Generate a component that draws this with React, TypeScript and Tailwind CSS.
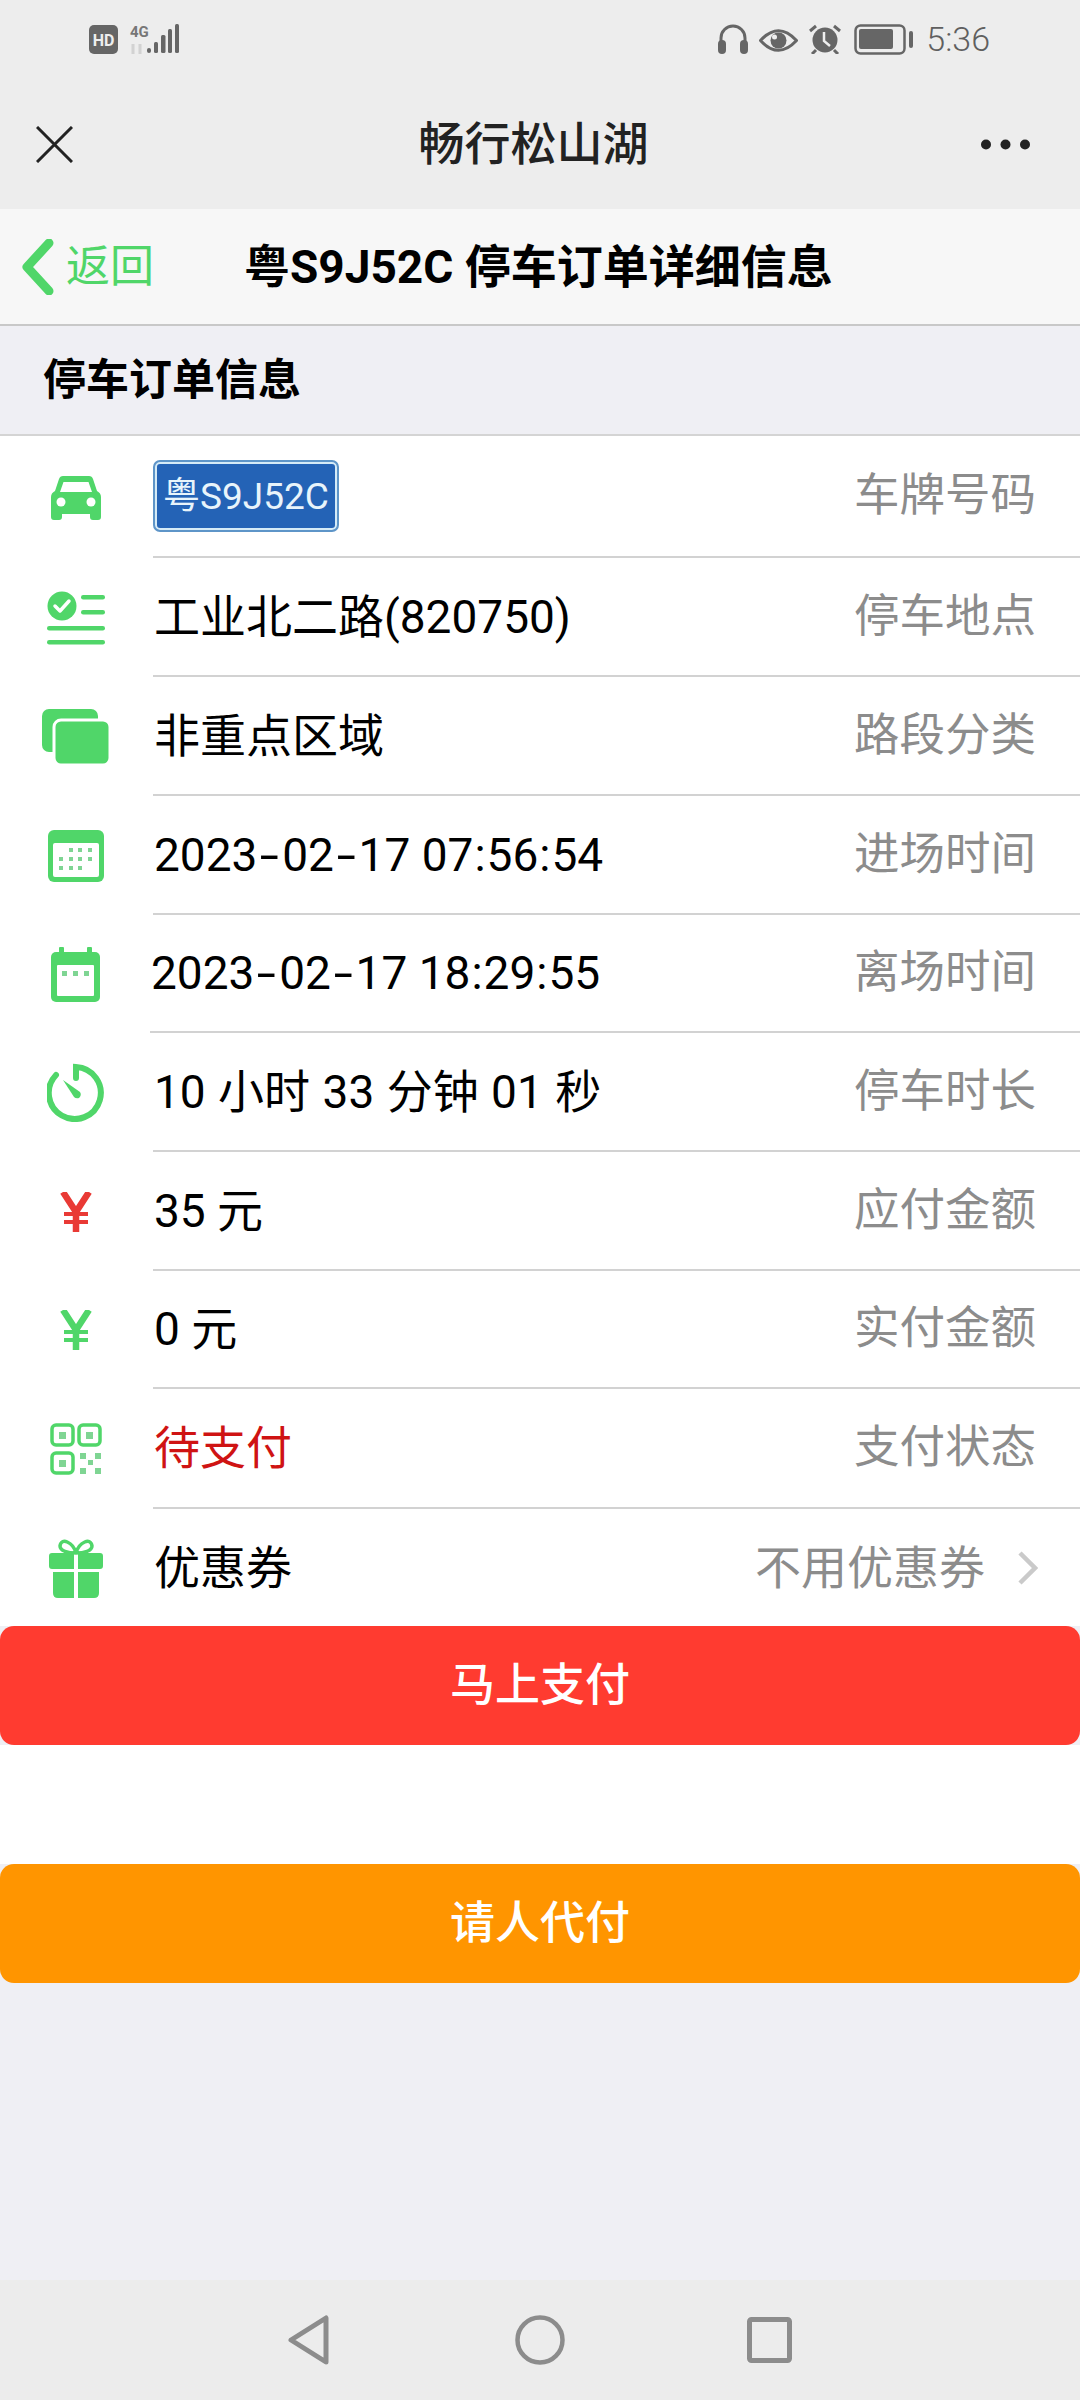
import React from 'react';

const fontStack = 'font-["Roboto","Noto_Sans_CJK_SC",sans-serif]';

const GREEN = '#50d669';
const DOT = '#7fd593';

const CarIcon = () => (
  <svg width="50" height="45" viewBox="0 0 50 45">
    <path fill={GREEN} d="M12 1h26q3 0 4 3l4 12q4 2 4 6v20q0 3-3 3h-5q-3 0-3-3v-3H11v3q0 3-3 3H3q-3 0-3-3V22q0-4 4-6L8 4q1-3 4-3z" />
    <path fill="#fff" d="M12.500 7h25l3.500 10H9z" />
    <circle cx="10" cy="27" r="4.500" fill="#fff" />
    <circle cx="40" cy="27" r="4.500" fill="#fff" />
  </svg>
);

const ListIcon = () => (
  <svg width="58" height="54" viewBox="0 0 58 54">
    <circle cx="15" cy="15" r="14.500" fill={GREEN} />
    <path d="M8 15l5 5 9-10" fill="none" stroke="#fff" strokeWidth="3.500" strokeLinecap="round" strokeLinejoin="round" />
    <rect x="34" y="4" width="24" height="4.500" rx="2.200" fill={GREEN} />
    <rect x="34" y="19" width="24" height="4.500" rx="2.200" fill={GREEN} />
    <rect x="0" y="35" width="58" height="4.500" rx="2.200" fill={GREEN} />
    <rect x="0" y="49" width="58" height="4.500" rx="2.200" fill={GREEN} />
  </svg>
);

const CardsIcon = () => (
  <svg width="68" height="56" viewBox="0 0 68 56">
    <rect x="0" y="0" width="56" height="43" rx="7" fill={GREEN} />
    <rect x="12" y="11" width="56" height="45" rx="7" fill={GREEN} stroke="#fff" strokeWidth="3" />
  </svg>
);

const CalendarDotsIcon = () => {
  const dots = [
    [23, 20], [32, 20], [42, 20],
    [13, 29], [23, 29], [32, 29], [42, 29],
    [13, 38], [23, 38], [32, 38],
  ];
  return (
    <svg width="56" height="52" viewBox="0 0 56 52">
      <rect x="0" y="0" width="56" height="52" rx="6" fill={GREEN} />
      <rect x="5" y="13" width="46" height="34" rx="2" fill="#fff" />
      {dots.map(([x, y]) => (
        <rect key={`${x}-${y}`} x={x - 2} y={y - 2} width="4" height="4" fill={DOT} />
      ))}
    </svg>
  );
};

const CalendarIcon = () => (
  <svg width="50" height="55" viewBox="0 0 50 55">
    <rect x="8" y="0" width="5" height="10" rx="1" fill={GREEN} />
    <rect x="36" y="0" width="5" height="10" rx="1" fill={GREEN} />
    <rect x="0" y="5" width="49" height="50" rx="5" fill={GREEN} />
    <rect x="6" y="18" width="37" height="31" rx="1" fill="#fff" />
    <rect x="11" y="24" width="5" height="5" fill={DOT} />
    <rect x="22" y="24" width="5" height="5" fill={DOT} />
    <rect x="33" y="24" width="5" height="5" fill={DOT} />
  </svg>
);

const TimerIcon = () => (
  <svg width="58" height="59" viewBox="0 0 58 59">
    <path d="M9 12A26 26 0 1 0 29 4v11" fill="none" stroke={GREEN} strokeWidth="6" strokeLinecap="round" />
    <path d="M16 17l17 12q2 3-1 6-3 1-5-1z" fill={GREEN} />
  </svg>
);

const YuanIcon = ({ color }: { color: string }) => (
  <svg width="32" height="40" viewBox="0 0 32 40">
    <path d="M3 0l13 20L29 0M16 20v20" fill="none" stroke={color} strokeWidth="6.500" />
    <path d="M4 22h24M4 30h24" fill="none" stroke={color} strokeWidth="4" />
  </svg>
);

const QrIcon = () => (
  <svg width="52" height="52" viewBox="0 0 52 52">
    <rect x="2" y="2" width="21" height="20" rx="4" fill="none" stroke={GREEN} strokeWidth="3.500" />
    <rect x="29" y="2" width="21" height="20" rx="4" fill="none" stroke={GREEN} strokeWidth="3.500" />
    <rect x="2" y="30" width="21" height="20" rx="4" fill="none" stroke={GREEN} strokeWidth="3.500" />
    <rect x="9" y="9" width="7" height="7" fill={DOT} />
    <rect x="36" y="9" width="7" height="7" fill={DOT} />
    <rect x="9" y="37" width="7" height="7" fill={DOT} />
    <rect x="30" y="30" width="6" height="6" fill={DOT} />
    <rect x="45" y="30" width="6" height="6" fill={DOT} />
    <rect x="38" y="37" width="5" height="5" fill={DOT} />
    <rect x="30" y="45" width="6" height="6" fill={DOT} />
    <rect x="45" y="45" width="6" height="6" fill={DOT} />
  </svg>
);

const GiftIcon = () => (
  <svg width="54" height="60" viewBox="0 0 54 60">
    <path d="M27 15C24 4 12-1 11 8c0 5 8 7 16 7zM27 15C30 4 42-1 43 8c0 5-8 7-16 7z" fill="none" stroke={GREEN} strokeWidth="3.500" />
    <path fill={GREEN} d="M3 15h22v16H3q-3 0-3-3V18q0-3 3-3zM29 15h22q3 0 3 3v10q0 3-3 3H29zM4 34h21v26H9q-5 0-5-5zM29 34h21v21q0 5-5 5H29z" />
  </svg>
);

// date strings have much wider dashes and colons in the phone's font
const DateText = ({ text }: { text: string }) => (
  <>
    {text.split(/([-:])/).map((part, i) => {
      if (part === '-') return <span key={i} className="mx-[6px] inline-block scale-x-150">-</span>;
      if (part === ':') return <span key={i} className="mx-[1px] inline-block">:</span>;
      return <span key={i}>{part}</span>;
    })}
  </>
);

const rows = [
  { icon: <CarIcon />, value: null, label: '车牌号码', height: 'h-[122px]' },
  { icon: <ListIcon />, value: '工业北二路(820750)', label: '停车地点', height: 'h-[119px]' },
  { icon: <CardsIcon />, value: '非重点区域', label: '路段分类', height: 'h-[119px]' },
  { icon: <CalendarDotsIcon />, date: '2023-02-17 07:56:54', label: '进场时间', height: 'h-[119px]' },
  { icon: <CalendarIcon />, date: '2023-02-17 18:29:55', label: '离场时间', height: 'h-[118px]', shift: true },
  { icon: <TimerIcon />, value: '10 小时 33 分钟 01 秒', label: '停车时长', height: 'h-[119px]', wide: true },
  { icon: <YuanIcon color="#e93a35" />, value: '35 元', label: '应付金额', height: 'h-[119px]' },
  { icon: <YuanIcon color={GREEN} />, value: '0 元', label: '实付金额', height: 'h-[118px]' },
  { icon: <QrIcon />, value: '待支付', label: '支付状态', red: true, height: 'h-[120px]' },
];

const StatusBar = () => (
  <div className="flex h-[80px] items-start justify-between pl-[89px] pr-[90px] pt-[24px] text-[#5f5f5f]">
    <svg width="91" height="31" viewBox="0 0 91 31">
      <rect x="0" y="1" width="29" height="29" rx="5" fill="#666" />
      <text x="14.500" y="21.500" textAnchor="middle" fontSize="16" fontWeight="700" fill="#eee" fontFamily="Roboto, sans-serif">HD</text>
      <text x="41" y="13" fontSize="15" fontWeight="700" fill="#777" fontFamily="Roboto, sans-serif">4G</text>
      <path d="M44 20v10M51 20v10" stroke="#d2d2d2" strokeWidth="3" />
      <rect x="58" y="24" width="4" height="5" rx="2" fill="#666" />
      <rect x="65" y="18" width="4" height="11" rx="1.500" fill="#666" />
      <rect x="72" y="11" width="4.500" height="18" rx="1.500" fill="#666" />
      <rect x="79" y="5" width="4" height="24" rx="1.500" fill="#666" />
      <rect x="86" y="0" width="4" height="29" rx="1.500" fill="#666" />
    </svg>
    <div className="flex items-start">
      <svg width="30" height="30" viewBox="0 0 30 30">
        <path d="M3 26V14a12 12 0 0 1 24 0v12" fill="none" stroke="#666" strokeWidth="3" />
        <rect x="0" y="16" width="8" height="14" rx="4" fill="#666" />
        <rect x="22" y="16" width="8" height="14" rx="4" fill="#666" />
      </svg>
      <svg className="ml-[11px] mt-[5px]" width="39" height="23" viewBox="0 0 39 23">
        <path d="M1.500 11.500Q19.500-8 37.500 11.500 19.500 31 1.500 11.500z" fill="none" stroke="#666" strokeWidth="3" />
        <circle cx="19.500" cy="11.500" r="8" fill="#666" />
        <circle cx="15.500" cy="8" r="2.500" fill="#eee" />
      </svg>
      <svg className="ml-[10px]" width="34" height="30" viewBox="0 0 34 30">
        <circle cx="17" cy="16" r="12.500" fill="#666" />
        <path d="M16 8v9l6 5" fill="none" stroke="#eee" strokeWidth="2.500" />
        <path d="M2 7l6-5M32 7l-6-5M8 26l-4 4M26 26l4 4" stroke="#666" strokeWidth="3" />
      </svg>
      <svg className="ml-[12px]" width="59" height="31" viewBox="0 0 59 31">
        <rect x="1.500" y="1.500" width="49" height="28" rx="5" fill="none" stroke="#666" strokeWidth="2.500" />
        <rect x="5" y="5" width="34" height="20" rx="2" fill="#666" />
        <rect x="55" y="7" width="4" height="17" rx="2" fill="#666" />
      </svg>
      <span className={`ml-[13px] text-[34px] font-light leading-[31px] ${fontStack}`}>5:36</span>
    </div>
  </div>
);

const TitleBar = () => (
  <div className="flex h-[129px] items-center justify-between pb-[1px] pl-[36px] pr-[50px]">
    <svg width="37" height="37" viewBox="0 0 37 37">
      <path d="M1 1l35 35M36 1L1 36" stroke="#222" strokeWidth="3" />
    </svg>
    <span className={`ml-[13px] text-[46px] font-medium leading-none text-[#222] ${fontStack}`}>畅行松山湖</span>
    <svg width="49" height="11" viewBox="0 0 49 11">
      <circle cx="5" cy="5.500" r="5" fill="#222" />
      <circle cx="24.500" cy="5.500" r="5" fill="#222" />
      <circle cx="44" cy="5.500" r="5" fill="#222" />
    </svg>
  </div>
);

const NavBar = () => (
  <div className="flex h-[117px] items-center border-b-2 border-[#c8c8c8] bg-[#f7f7f7] pl-[20px]">
    <svg width="35" height="56" viewBox="0 0 35 56">
      <path d="M29 4L7 28l22 24" fill="none" stroke={GREEN} strokeWidth="9" strokeLinecap="round" strokeLinejoin="round" />
    </svg>
    <span className={`ml-[11px] text-[44px] leading-none text-[#50d669] ${fontStack}`}>返回</span>
    <span className={`ml-[90px] text-[46px] font-bold leading-none text-black ${fontStack}`}>粤S9J52C 停车订单详细信息</span>
  </div>
);

const Plate = () => (
  <div className="-ml-[1px] rounded-[7px] border-2 border-[#5e95c8] bg-[#2463b6]">
    <div className={`flex h-[68px] w-[182px] items-center justify-center rounded-[5px] border-2 border-[#d5ebf7] text-[37px] leading-none text-[#e8f4fb] ${fontStack}`}>粤S9J52C</div>
  </div>
);

export default function App() {
  return (
    <div className={`flex h-[2400px] w-[1080px] flex-col bg-[#efeff4] ${fontStack}`}>
      <div className="bg-[#ededed]">
        <StatusBar />
        <TitleBar />
      </div>
      <NavBar />
      <div className="flex h-[110px] items-center border-b-2 border-[#d4d4d4] pl-[43px] pt-[1px]">
        <span className="text-[43px] font-bold leading-none text-black">停车订单信息</span>
      </div>

      <div className="bg-white">
        {rows.map((row) => (
          <div key={row.label} className={`flex items-stretch ${row.height}`}>
            <div className="flex w-[153px] shrink-0 items-center justify-center pr-[1px]">{row.icon}</div>
            <div className={`flex flex-1 items-center justify-between border-b-2 border-[#d2d2d2] pr-[44px] ${row.shift ? '-ml-[3px]' : ''}`}>
              <div className={`pl-[1px] text-[46px] leading-none ${row.red ? 'text-[#cf1313]' : 'text-black'} ${row.wide ? '[word-spacing:1px]' : ''}`}>
                {row.date ? <DateText text={row.date} /> : row.value ?? <Plate />}
              </div>
              <span className="text-[45.500px] leading-none text-[#8c8c8c]">{row.label}</span>
            </div>
          </div>
        ))}
        <div className="flex h-[117px] items-stretch">
          <div className="flex w-[153px] shrink-0 items-center justify-center pr-[1px]"><GiftIcon /></div>
          <div className="flex flex-1 items-center justify-between pr-[42px]">
            <span className="pl-[1px] text-[46px] leading-none text-black">优惠券</span>
            <div className="flex items-center gap-[33px]">
              <span className="text-[46px] leading-none text-[#8c8c8c]">不用优惠券</span>
              <svg width="20" height="34" viewBox="0 0 20 34">
                <path d="M2 2l15 15L2 32" fill="none" stroke="#cacaca" strokeWidth="4.500" />
              </svg>
            </div>
          </div>
        </div>
      </div>

      <button className="flex h-[119px] w-full items-center justify-center rounded-[14px] bg-[#ff3b30] text-[45px] font-medium text-white">马上支付</button>
      <div className="h-[119px] bg-white" />
      <button className="flex h-[119px] w-full items-center justify-center rounded-[14px] bg-[#ff9500] text-[45px] font-medium text-white">请人代付</button>

      <div className="mt-auto flex h-[120px] items-center bg-[#ececec]">
        <div className="flex w-full items-center pb-[1px] pl-[287px]">
          <svg width="43" height="50" viewBox="0 0 43 50">
            <path d="M39 3v44L4 25z" fill="none" stroke="#8c8c8c" strokeWidth="5" strokeLinejoin="round" />
          </svg>
          <svg className="ml-[185px]" width="50" height="50" viewBox="0 0 50 50">
            <circle cx="25" cy="25" r="22.500" fill="none" stroke="#8c8c8c" strokeWidth="4.500" />
          </svg>
          <svg className="ml-[182px]" width="45" height="46" viewBox="0 0 45 46">
            <rect x="2.500" y="2.500" width="40" height="41" rx="2" fill="none" stroke="#8c8c8c" strokeWidth="5" />
          </svg>
        </div>
      </div>
    </div>
  );
}
